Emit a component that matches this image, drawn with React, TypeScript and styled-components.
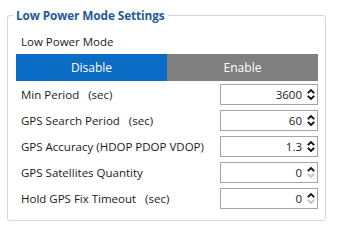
import React from "react";
import styled, { createGlobalStyle } from "styled-components";

const Global = createGlobalStyle`
  html, body { margin: 0; padding: 0; background: #ffffff; }
  body { font-family: "Open Sans", "Noto Sans", sans-serif; }
`;

const Page = styled.div`
  width: 340px;
  height: 240px;
  padding: 15px 0 0 7px;
  box-sizing: border-box;
`;

const Frame = styled.div`
  position: relative;
  width: 319px;
  height: 206px;
  box-sizing: border-box;
  border: 1px solid #d3d8de;
  border-radius: 3px;
  padding: 16px 7px 0 8px;
`;

const Legend = styled.div`
  position: absolute;
  top: -10px;
  left: 5px;
  padding: 0 3px;
  background: #ffffff;
  color: #1d5c97;
  font-weight: 700;
  font-size: 11.8px;
  letter-spacing: -0.1px;
  line-height: 18px;
`;

const Label = styled.div`
  font-size: 11.5px;
  color: #1a1a1a;
  line-height: 20px;
  padding-left: 5px;
`;

const Toggle = styled.div`
  display: grid;
  grid-template-columns: 151px 151px;
  height: 27px;
  margin-top: 2px;
  margin-bottom: 3px;
`;

const ToggleButton = styled.div<{ $active: boolean }>`
  background: ${(p) => (p.$active ? "#0a6cc4" : "#808080")};
  color: #ffffff;
  font-size: 12px;
  display: flex;
  align-items: center;
  justify-content: center;
`;

const Rows = styled.div`
  display: flex;
  flex-direction: column;
  gap: 5px;
`;

const Row = styled.div`
  display: flex;
  align-items: center;
  justify-content: space-between;
  height: 21px;
  padding-left: 5px;
`;

const RowLabel = styled.span`
  font-size: 11.5px;
  color: #1a1a1a;
  white-space: pre;
`;

const Spin = styled.div`
  width: 98px;
  height: 21px;
  box-sizing: border-box;
  border: 1px solid #a5a5a5;
  display: flex;
  align-items: center;
  justify-content: flex-end;
  padding-right: 1px;
  gap: 4px;
`;

const Value = styled.span`
  font-size: 11.5px;
  color: #1a1a1a;
`;

const Arrows = styled.svg`
  display: block;
`;

const SpinArrows: React.FC<{ downDisabled?: boolean }> = ({ downDisabled }) => (
  <Arrows width="10" height="15" viewBox="0 0 10 15">
    <path d="M1.8 6.2 L5 3 L8.2 6.2" fill="none" stroke="#111" strokeWidth="1.9" />
    <path
      d="M1.8 8.8 L5 12 L8.2 8.8"
      fill="none"
      stroke={downDisabled ? "#c4c4c4" : "#111"}
      strokeWidth="1.9"
    />
  </Arrows>
);

const rows = [
  { label: "Min Period   (sec)", value: "3600" },
  { label: "GPS Search Period   (sec)", value: "60" },
  { label: "GPS Accuracy (HDOP PDOP VDOP)", value: "1.3" },
  { label: "GPS Satellites Quantity", value: "0", min: true },
  { label: "Hold GPS Fix Timeout   (sec)", value: "0", min: true },
];

export default function App() {
  return (
    <>
      <Global />
      <Page>
        <Frame>
          <Legend>Low Power Mode Settings</Legend>
          <Label>Low Power Mode</Label>
          <Toggle>
            <ToggleButton $active>Disable</ToggleButton>
            <ToggleButton $active={false}>Enable</ToggleButton>
          </Toggle>
          <Rows>
            {rows.map((r) => (
              <Row key={r.label}>
                <RowLabel>{r.label}</RowLabel>
                <Spin>
                  <Value>{r.value}</Value>
                  <SpinArrows downDisabled={r.min} />
                </Spin>
              </Row>
            ))}
          </Rows>
        </Frame>
      </Page>
    </>
  );
}
